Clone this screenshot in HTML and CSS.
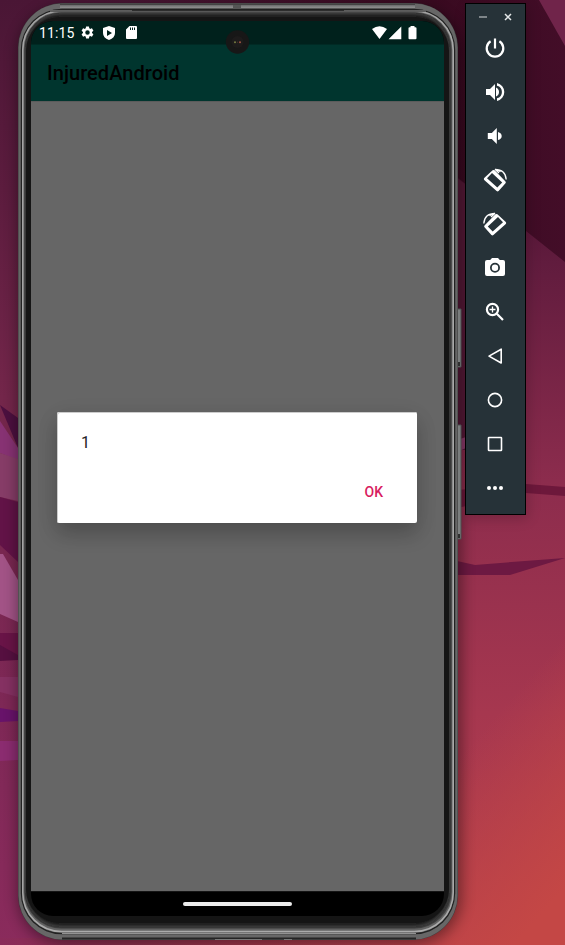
FILE: index.html
```
<!DOCTYPE html>
<html lang="en">
<head>
<meta charset="utf-8">
<title>Android Emulator</title>
<link rel="stylesheet" href="styles.css">
</head>
<body>
<svg class="wallpaper" viewBox="0 0 565 945" aria-hidden="true">
  <defs>
    <linearGradient id="left" x1="0" y1="0" x2="0" y2="1"><stop offset="0" stop-color="#4a1635"/><stop offset=".2" stop-color="#5c1c3e"/><stop offset=".42" stop-color="#73264a"/><stop offset=".75" stop-color="#7e2856"/><stop offset="1" stop-color="#8a2b5c"/></linearGradient>
    <linearGradient id="right" x1="0" y1="0" x2="0" y2="1"><stop offset="0" stop-color="#4c1231"/><stop offset=".12" stop-color="#611c3e"/><stop offset=".4" stop-color="#8c2c4d"/><stop offset=".7" stop-color="#a6374f"/><stop offset="1" stop-color="#b53f4c"/></linearGradient>
    <linearGradient id="glow" gradientUnits="userSpaceOnUse" x1="465" y1="750" x2="590" y2="860"><stop offset="0" stop-color="#c44745" stop-opacity="0"/><stop offset="1" stop-color="#c44745"/></linearGradient>
    <linearGradient id="bottom"><stop offset="0" stop-color="#8a2b5a"/><stop offset=".25" stop-color="#8f304e"/><stop offset=".8" stop-color="#b53f4c"/><stop offset="1" stop-color="#c04546"/></linearGradient>
    <linearGradient id="night" x1="0" y1="0" x2="1" y2="0"><stop offset="0" stop-color="#4a1635"/><stop offset=".72" stop-color="#390a20"/><stop offset="1" stop-color="#430d28"/></linearGradient>
    <linearGradient id="topedge" x1="0" y1="0" x2="0" y2="1"><stop offset="0" stop-color="#69686a"/><stop offset=".6" stop-color="#8d8d8d"/><stop offset="1" stop-color="#555"/></linearGradient>
    <filter id="soft" x="-10%" y="-10%" width="120%" height="120%"><feGaussianBlur stdDeviation="7"/></filter>
    <filter id="fade"><feGaussianBlur stdDeviation="2"/></filter>
  </defs>
  <rect width="240" height="945" fill="url(#left)"/>
  <rect x="240" y="170" width="325" height="775" fill="url(#right)"/>
  <rect x="400" y="570" width="165" height="375" fill="url(#glow)"/>
  <rect y="938" width="458" height="7" fill="url(#bottom)"/>
  <path d="M100 0H565V262L526 231L440 164V60H100Z" fill="url(#night)"/>
  <path d="M539 0H565V46Z" fill="#70244a"/>
  <path d="M457 178L466 185V450H457Z" fill="#571a38"/>
  <path d="M457 440L466 437V448L457 452Z" fill="#8a3a69"/>
  <path d="M457 490L526 484L565 487V496L526 493L457 508Z" fill="#6d183b"/>
  <path d="M457 561L475 565L525 561L565 558L510 575H457Z" fill="#6d1942"/>
  <path d="M0 405L18 418V448Z" fill="#4c103f"/>
  <path d="M0 421L18 448V460L0 453Z" fill="#873273"/>
  <path d="M0 453L18 459V501L0 497Z" fill="#863c67"/>
  <path d="M0 497L18 502V562L0 545Z" fill="#621347"/>
  <path d="M0 554L3 554L18 580V622L0 614Z" fill="#a25386"/>
  <path d="M0 633H18V660H0Z" fill="#691447"/>
  <path d="M0 645L18 655V660L0 661Z" fill="#561040"/>
  <path d="M0 677H18V697L0 692Z" fill="#853162"/>
  <path d="M0 708L18 711V721L0 722Z" fill="#68136a"/>
  <path d="M0 741H18V760L0 761Z" fill="#8b2c70"/>
  <rect x="17" y="6" width="445" height="939" rx="48" fill="#000" opacity=".38" filter="url(#soft)"/>
  <g>
    <path d="M455 309h6v58h-6zM455 425h6v114h-6z" fill="#7d8080" stroke="#4d5050"/>
    <path d="M457.500 311v51M457.500 427v107" stroke="#9b9e9e"/>
    <path d="M457 362h3v4h-3zM457 534h3v4h-3z" fill="#303030"/>
  </g>
  <rect x="18" y="3" width="440" height="937" rx="45" fill="#3c3c3c"/>
  <rect x="18.500" y="3.500" width="439" height="936" rx="44" fill="#676767"/>
  <path d="M60 4.500H415" stroke="#444" stroke-width="2"/>
  <path d="M60 5H415V9H60Z" fill="url(#topedge)"/>
  <rect x="20.800" y="8.800" width="434.400" height="925.500" rx="41" fill="#222"/>
  <rect x="22" y="10" width="432" height="923" rx="40" fill="#656565"/>
  <rect x="22.800" y="11" width="430.400" height="920.500" rx="39" fill="none" stroke="#aaa" stroke-width="1.600"/>
  <path d="M50 11H426" stroke="#606060" stroke-width="2"/>
  <path d="M132 10.200H344" stroke="#1e1e1e" stroke-width="1.200"/>
  <rect x="24.500" y="12.500" width="427" height="916" rx="37" fill="#444"/>
  <rect x="27" y="15" width="421" height="910" rx="34" fill="#151515" stroke="#151515" filter="url(#fade)"/>
  <rect x="26" y="17" width="423" height="906" rx="34" fill="#151515"/>
  <path d="M62 933.500H416" stroke="#929292"/>
  <path d="M62 938.500H416" stroke="#242424" stroke-width="2"/>
  <path d="M233 5h8v4h-8z" fill="#555"/>
  <path d="M215 939.500h47M284 939.500h8" stroke="#777"/>
</svg>
<main class="desktop">
  <section class="screen">
    <header class="status">
      <span class="clock">11:15</span>
      <svg class="gear" viewBox="0 0 24 24"><path fill-rule="evenodd" d="M19.140 12.940c.04-.3.060-.61.060-.94s-.02-.64-.07-.94l2.030-1.580c.18-.14.230-.41.120-.61l-1.920-3.320c-.12-.22-.37-.29-.59-.22l-2.390.96c-.5-.38-1.030-.7-1.620-.94l-.36-2.540c-.04-.24-.24-.41-.48-.41h-3.840c-.24 0-.43.17-.47.410l-.36 2.540c-.59.240-1.130.570-1.620.940l-2.390-.96c-.22-.08-.47 0-.59.220L2.740 8.870c-.12.210-.08.470.120.610l2.030 1.580c-.05.300-.09.630-.09.940s.02.640.070.940l-2.030 1.580c-.18.140-.23.410-.12.610l1.920 3.320c.12.220.370.290.590.220l2.390-.96c.5.380 1.030.700 1.620.940l.36 2.540c.05.240.240.410.480.410h3.840c.24 0 .44-.17.470-.41l.36-2.540c.59-.24 1.130-.56 1.620-.94l2.390.960c.22.080.470 0 .590-.22l1.920-3.320c.12-.22.070-.47-.12-.61zM12 15.600a3.600 3.600 0 1 1 0-7.200 3.600 3.600 0 0 1 0 7.200z"/></svg>
      <svg class="shield" viewBox="0 0 12 14"><path fill-rule="evenodd" d="M6 0L12 2V7Q12 12 6 14Q0 12 0 7V2ZM4 4V10L9 7Z"/></svg>
      <svg class="sd" viewBox="0 0 11 13"><path fill-rule="evenodd" d="M3.500 0H10Q11 0 11 1V12Q11 13 10 13H1Q0 13 0 12V3.500ZM4 1.500V4H5V1.500ZM6 1.500V4H7V1.500ZM8 1.500V4H9V1.500Z"/></svg>
      <svg class="signals" viewBox="0 0 46 14"><path d="M0 3Q7.500-2.500 15 3L7.500 13ZM16.500 13.300L29.300 .500V13.300ZM38.500 0h4v1.200h1q1 0 1 1v10q0 1-1 1h-6q-1 0-1-1v-10q0-1 1-1h1Z"/></svg>
      <svg class="camera" viewBox="0 0 24 24"><circle cx="12.500" cy="12" r="11.700" fill="#171717"/><circle cx="12.500" cy="12" r="6" fill="#1d1b1b"/><circle cx="10" cy="12.200" r="1" fill="#747b42"/><circle cx="15" cy="12.200" r="1" fill="#a05442"/><circle cx="12.500" cy="12.200" r=".7" fill="#442d28"/></svg>
    </header>
    <div class="appbar">InjuredAndroid</div>
    <div class="content">
      <div class="dialog" role="dialog">
        <p class="message">1</p>
        <button class="ok">OK</button>
      </div>
    </div>
    <footer class="nav"><span class="handle"></span></footer>
  </section>
  <aside class="tools">
    <div class="window">
      <svg viewBox="0 0 10 10"><path d="M1 5H9" stroke="#9ca2a4" stroke-width="1.500"/></svg>
      <svg viewBox="0 0 10 10"><path d="M2 2L8 8M8 2L2 8" stroke="#e4e7e8" stroke-width="1.500"/></svg>
    </div>
    <svg viewBox="0 0 24 24"><path class="line" d="M12 2.500V12.500M7.600 5.300A8.300 8.300 0 1 0 16.400 5.300"/></svg>
    <svg viewBox="0 0 24 24"><path d="M3 9V15H7L12 20V4L7 9ZM13 7.500Q16 9 16 12T13 16.500ZM14 3V5.700A6.500 6.500 0 0 1 14 18.300V21A9.200 9.200 0 0 0 14 3Z"/></svg>
    <svg viewBox="0 0 24 24"><path d="M4.800 9V15H8.800L13.800 20V4L8.800 9ZM15 8Q18.700 9 18.700 12T15 16Z"/></svg>
    <svg viewBox="0 0 24 24"><g id="rotate"><path fill-rule="evenodd" d="M9.600 2.300Q10.600 1.500 11.600 2.300L22.500 13.500Q23.200 14.500 22.500 15.300L15.600 23Q14.600 23.900 13.600 23L1.200 12Q.4 11 1.200 10.100ZM9 5.100L4 10.300L14.300 19.600L19.200 14.400Z"/><path class="thin" d="M12 1.300Q22.500 1.300 23.200 11.500M12 1.300L16 5M14 1.600L17.500 3.600"/></g></svg>
    <svg class="mirrored" viewBox="0 0 24 24"><use href="#rotate"/></svg>
    <svg viewBox="0 0 24 24"><path fill-rule="evenodd" d="M9 2H15L16.800 4H20Q22 4 22 6V18Q22 20 20 20H4Q2 20 2 18V6Q2 4 4 4H7.200ZM12 6.800A5 5 0 1 0 12 16.800A5 5 0 0 0 12 6.800Z"/><circle cx="12" cy="11.800" r="3.200"/></svg>
    <svg viewBox="0 0 24 24"><circle class="line" cx="9.500" cy="9.500" r="5.600"/><path class="line" d="M13.800 13.800L20 20"/><path class="thin" d="M9.500 6.500V12.500M6.500 9.500H12.500"/></svg>
    <svg viewBox="0 0 24 24"><path class="nav-line" d="M18.200 5.200V19L6 12.100Z"/></svg>
    <svg viewBox="0 0 24 24"><circle class="nav-line" cx="12" cy="12" r="6.600"/></svg>
    <svg viewBox="0 0 24 24"><rect class="nav-line" x="5.500" y="5.500" width="13" height="13" rx=".5"/></svg>
    <svg viewBox="0 0 24 24"><circle cx="6" cy="12" r="2"/><circle cx="12" cy="12" r="2"/><circle cx="18" cy="12" r="2"/></svg>
  </aside>
</main>
</body>
</html>
```
FILE: styles.css
```
* { box-sizing: border-box; }
body { margin: 0; width: 565px; height: 945px; overflow: hidden; font-family: Roboto, sans-serif; background: #4a1635; }
svg { display: block; }
.wallpaper { position: absolute; inset: 0; width: 565px; height: 945px; }
.desktop { position: relative; display: flex; align-items: flex-start; gap: 21px; padding: 3px 0 0 31px; }
.screen { width: 413px; height: 895px; margin-top: 18px; display: flex; flex-direction: column; border-radius: 22px; overflow: hidden; background: #000; }
.status { position: relative; z-index: 1; height: 24px; flex: none; display: flex; align-items: center; padding: 0 26.500px 0 8px; background: #00211c; border-bottom: 1px solid #002a24; color: #fff; fill: #fff; }
.clock { width: 36px; font-size: 14px; line-height: 22px; letter-spacing: .1px; }
.gear { width: 15px; height: 15px; margin-left: 5px; }
.shield { width: 12px; height: 14px; margin-left: 8px; }
.sd { width: 11px; height: 13px; margin-left: 11px; }
.signals { width: 46px; height: 14px; margin-left: auto; }
.camera { position: absolute; left: 194px; top: 9px; width: 24px; height: 24px; overflow: visible; }
.appbar { height: 56px; flex: none; padding-left: 16px; background: #00352e; color: #000; font-size: 20px; font-weight: 500; line-height: 57px; letter-spacing: .05px; }
.content { flex: 1; padding: 311px 0 0 26px; background: #666; box-shadow: inset 0 1px #5b5b5b; }
.dialog { width: 360px; height: 111px; display: flex; flex-direction: column; align-items: flex-end; padding: 20px 34px 0 25px; border-radius: 2px; background: #fff; box-shadow: inset 1px 1px #ccc, 0 11px 20px rgba(0,0,0,.2), 0 5px 25px rgba(0,0,0,.07); }
.message { align-self: stretch; margin: 0 0 0 -1px; font-size: 16px; line-height: 22px; color: #222; }
.ok { margin: 28px 0 0; padding: 0; border: 0; background: none; color: #d81b60; font: 500 14px/20px Roboto, sans-serif; letter-spacing: 0; }
.nav { height: 25px; flex: none; display: flex; justify-content: center; align-items: center; padding-right: 1px; border-top: 1px solid #151515; }
.handle { width: 109px; height: 4px; margin-top: -1px; border-radius: 2px; background: #ececec; }
.tools { width: 61px; height: 512px; padding-right: 1px; border: 1px solid #000; background: #263238; display: flex; flex-direction: column; align-items: center; gap: 20px; color: #fff; fill: #fff; box-shadow: 2px 4px 12px rgba(0,0,0,.18); }
.tools > svg { width: 24px; height: 24px; flex: none; overflow: visible; }
.window { width: 35px; height: 12px; margin: 7px 0 -7px; display: flex; justify-content: space-between; align-items: center; }
.window svg { width: 10px; height: 10px; }
.mirrored { transform: scaleX(-1); }
.line { fill: none; stroke: #fff; stroke-width: 2.2; }
.thin { fill: none; stroke: #fff; stroke-width: 1.3; }
.nav-line { fill: none; stroke: #fff; stroke-width: 1.6; stroke-linejoin: round; }
```
